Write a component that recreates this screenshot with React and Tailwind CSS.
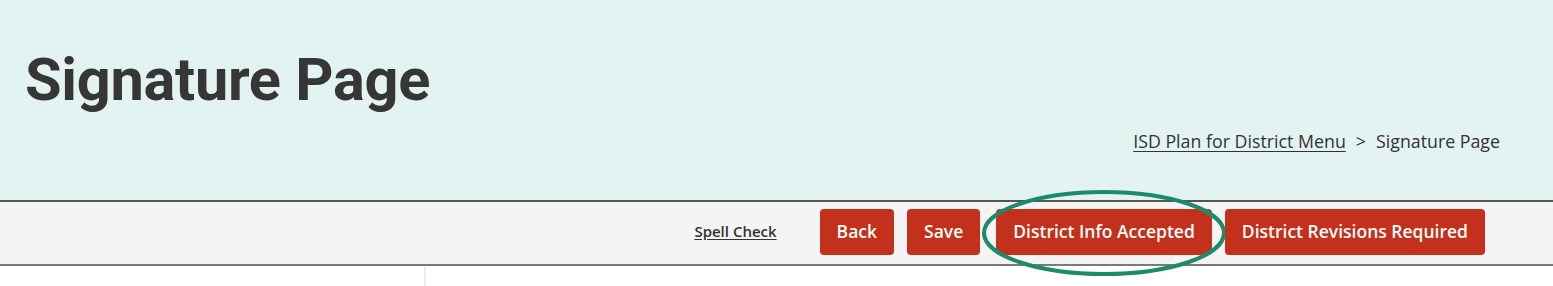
const actions = [
  { label: "Back" },
  { label: "Save" },
  { label: "District Info Accepted", circled: true },
  { label: "District Revisions Required" },
];

const App = () => {
  return (
    <div className="w-[1553px] h-[286px] overflow-hidden bg-white" style={{ fontFamily: "'Open Sans', sans-serif" }}>
      {/* Page header */}
      <header className="h-[200px] bg-[#e3f3f2] px-[25px] pt-[40px] flex flex-col">
        <h1
          className="text-[59.5px] leading-[80px] font-bold text-[#363636] tracking-[-0.3px]"
          style={{ fontFamily: "Roboto, sans-serif" }}
        >
          Signature Page
        </h1>
        <nav className="mt-[8px] self-end pr-[28px] flex items-center text-[17.8px] text-[#333]">
          <a href="#" className="underline underline-offset-[3px] decoration-[1px]">
            ISD Plan for District Menu
          </a>
          <span className="mx-[10px]">&gt;</span>
          <span>Signature Page</span>
        </nav>
      </header>

      {/* Toolbar */}
      <div className="h-[66px] border-t-2 border-b-2 border-t-[#555] border-b-[#7a7a7a] bg-[#f4f4f4] flex items-center justify-end pr-[68px] pb-[3px]">
        <a href="#" className="mr-[43px] text-[15px] font-semibold text-[#333] underline underline-offset-2">
          Spell Check
        </a>
        <div className="flex items-center gap-[13px]">
          {actions.map((a) => (
            <div key={a.label} className={`relative ${a.circled ? "ml-[3px]" : ""}`}>
              <button className="h-[46px] rounded-[4px] bg-[#c3301b] px-[17px] text-[17.5px] font-semibold text-white">
                {a.label}
              </button>
              {a.circled && (
                <svg
                  className="absolute left-[-14px] top-[-20px] pointer-events-none"
                  width="248"
                  height="90"
                  viewBox="0 0 248 90"
                >
                  <ellipse cx="122" cy="44" rx="120" ry="41" fill="none" stroke="#1d8a6b" strokeWidth="4" />
                </svg>
              )}
            </div>
          ))}
        </div>
      </div>

      {/* Content */}
      <div className="flex h-[20px]">
        <div className="w-[426px] border-r-2 border-[#ececec]" />
      </div>
    </div>
  );
};

export default App;
